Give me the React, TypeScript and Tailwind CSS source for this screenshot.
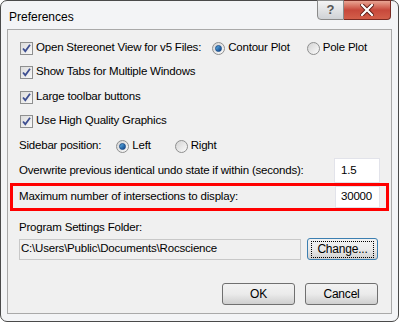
const font = { fontFamily: '"Liberation Sans", Arial, sans-serif' }

const Check = () => (
    <span className="w-[13px] h-[13px] border border-[#8e8f8f] bg-gradient-to-br from-[#dcdcdc] to-[#f8f8f8] flex items-center justify-center shrink-0">
        <svg width="11" height="11" viewBox="0 0 11 11">
            <path d="M2 5.5 L4.3 8.2 L9 1.8" fill="none" stroke="#3e4f91" strokeWidth="1.8" />
        </svg>
    </span>
)

const Radio = ({ on }: { on?: boolean }) => (
    <span className="w-[13px] h-[13px] rounded-full border border-[#8e8f8f] bg-gradient-to-br from-[#d4d4d4] to-[#fbfbfb] flex items-center justify-center shrink-0">
        {on && <span className="w-[7px] h-[7px] rounded-full bg-gradient-to-br from-[#5fb3e8] to-[#0d3f86] border border-[#1a4d8a]" />}
    </span>
)

const Btn = ({ label, focus, w }: { label: string; focus?: boolean; w: string }) => (
    <div className={`${w} h-[22px] rounded-[3px] border ${focus ? 'border-[#3c7fb1]' : 'border-[#707070]'} bg-gradient-to-b from-[#f2f2f2] via-[#ebebeb] to-[#cfcfcf] flex items-center justify-center text-[12px] text-black`}>
        <span className={focus ? 'outline outline-1 outline-dotted outline-black px-[5px] leading-[15px]' : ''}>{label}</span>
    </div>
)

export default function App() {
    return (
        <div className="w-[399px] h-[322px] bg-white whitespace-nowrap" style={font}>
            <div className="w-[399px] h-[322px] rounded-[7px] border border-[#4a4a4a] bg-[#f3f4f6] flex flex-col">
                <div className="h-[28px] flex items-start justify-between shrink-0">
                    <span className="text-[12px] text-black ml-[8px] mt-[7px]">Preferences</span>
                    <div className="flex mr-[7px] -mt-px">
                        <div className="w-[27px] h-[20px] rounded-bl-[4px] border border-[#8a8a8a] bg-gradient-to-b from-[#f4f4f4] to-[#cfd2d6] flex items-center justify-center text-[13px] text-[#555] font-bold">?</div>
                        <div className="w-[47px] h-[20px] rounded-br-[4px] border border-[#7a2a22] border-l-0 bg-gradient-to-b from-[#e8a493] via-[#c7483b] to-[#d35f4a] flex items-center justify-center">
                            <svg width="14" height="12" viewBox="0 0 14 12">
                                <path d="M2 1 L12 11 M12 1 L2 11" stroke="#5a1a14" strokeWidth="4" strokeLinecap="square" />
                                <path d="M2 1 L12 11 M12 1 L2 11" stroke="#ffffff" strokeWidth="2.2" strokeLinecap="square" />
                            </svg>
                        </div>
                    </div>
                </div>
                <div className="mx-[6px] mb-[7px] flex-1 border border-[#a9a9a9] bg-[#f0f0f0] flex flex-col text-[11.5px] tracking-[-0.2px] text-black">
                    <div className="h-6 mt-[6px] flex items-center pl-[12px]">
                        <Check />
                        <span className="ml-[3px]">Open Stereonet View for v5 Files:</span>
                        <div className="flex items-center ml-[11px]">
                            <Radio on />
                            <span className="ml-[3px]">Contour Plot</span>
                        </div>
                        <div className="flex items-center ml-[17px]">
                            <Radio />
                            <span className="ml-[3px]">Pole Plot</span>
                        </div>
                    </div>
                    <div className="h-6 flex items-center pl-[12px]">
                        <Check />
                        <span className="ml-[3px]">Show Tabs for Multiple Windows</span>
                    </div>
                    <div className="h-6 mt-px flex items-center pl-[12px]">
                        <Check />
                        <span className="ml-[3px]">Large toolbar buttons</span>
                    </div>
                    <div className="h-6 flex items-center pl-[12px]">
                        <Check />
                        <span className="ml-[3px]">Use High Quality Graphics</span>
                    </div>
                    <div className="h-6 mt-px flex items-center pl-[11px]">
                        <span>Sidebar position:</span>
                        <div className="flex items-center ml-[15px]">
                            <Radio on />
                            <span className="ml-[3px]">Left</span>
                        </div>
                        <div className="flex items-center ml-[24px]">
                            <Radio />
                            <span className="ml-[3px]">Right</span>
                        </div>
                    </div>
                    <div className="h-[25px] flex items-center justify-between pl-[11px] pr-[11px]">
                        <span>Overwrite previous identical undo state if within (seconds):</span>
                        <div className="w-[46px] h-[25px] bg-white border border-[#e2e3ea] flex items-center pl-[6px]">1.5</div>
                    </div>
                    <div className="h-[28px] ml-[2px] mr-[2px] border-[3px] border-[#ff0000] flex items-center justify-between pl-[6px] pr-[6px]">
                        <span>Maximum number of intersections to display:</span>
                        <div className="w-[45px] h-[22px] bg-white border border-[#e2e3ea] flex items-center pl-[5px]">30000</div>
                    </div>
                    <div className="h-6 mt-[5px] flex items-center pl-[11px]">Program Settings Folder:</div>
                    <div className="flex items-center pl-[11px] pr-[13px] mt-[-2px] justify-between">
                        <div className="w-[282px] h-[21px] border border-[#c8c8c8] bg-[#f0f0f0] flex items-center pl-px">C:\Users\Public\Documents\Rocscience</div>
                        <Btn label="Change..." focus w="w-[71px]" />
                    </div>
                    <div className="flex justify-end gap-[10px] pr-[13px] mt-[23px]">
                        <Btn label="OK" w="w-[73px]" />
                        <Btn label="Cancel" w="w-[73px]" />
                    </div>
                </div>
            </div>
        </div>
    )
}
